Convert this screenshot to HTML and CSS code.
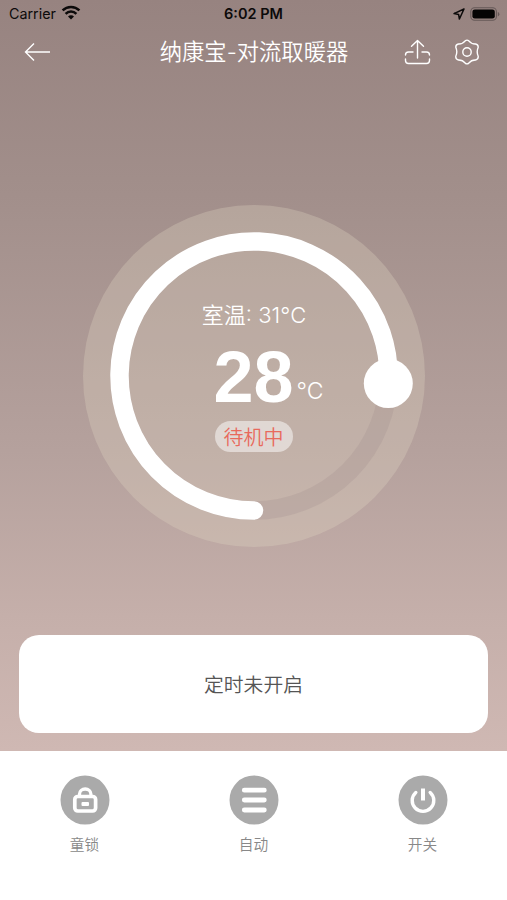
FILE: index.html
```html
<!DOCTYPE html>
<html lang="zh-CN">
<head>
    <meta charset="UTF-8">
    <meta name="viewport" content="width=device-width, initial-scale=1.0">
    <title>纳康宝-对流取暖器</title>
    <link rel="stylesheet" href="styles.css">
</head>
<body>
    <div class="main">
        <div class="status-bar">
            <div class="carrier">
                <span>Carrier</span>
                <svg width="20" height="16" viewBox="0 0 20 16" fill="none" stroke="#0c0a0a" stroke-width="2.5">
                    <path d="M1.600 5.400a12 12 0 0 1 16.800 0"/>
                    <path d="M4.600 8.800a7.700 7.700 0 0 1 10.800 0"/>
                    <path d="M10 14.400l-3-3a4.200 4.200 0 0 1 6 0z" fill="#0c0a0a" stroke="none"/>
                </svg>
            </div>
            <span class="time">6:02 PM</span>
            <div class="battery">
                <svg width="12" height="12" viewBox="0 0 12 12" fill="none" stroke="#0c0a0a" stroke-width="1.5" stroke-linejoin="round">
                    <path d="M11 1L1 5.600l4.600.8.8 4.600z"/>
                </svg>
                <svg width="30" height="14" viewBox="0 0 30 14">
                    <rect x=".8" y=".8" width="25.600" height="12.400" rx="3.800" fill="none" stroke="#655857" stroke-width="1.1"/>
                    <rect x="2.400" y="2.400" width="22.400" height="9.200" rx="2.400" fill="#050404"/>
                    <path d="M27.800 5v4.400q1.600-.6 1.600-2.200t-1.600-2.200z" fill="#655857"/>
                </svg>
            </div>
        </div>
        <div class="nav">
            <svg class="back" width="27" height="20" viewBox="0 0 27 20" fill="none" stroke="#fff" stroke-width="1.4">
                <path d="M26 10H2M10 1.500L1.500 10l8.500 8.500"/>
            </svg>
            <h1>纳康宝-对流取暖器</h1>
            <div class="actions">
                <svg width="27" height="26" viewBox="0 0 27 26" fill="none" stroke="#fff" stroke-width="1.4" stroke-linecap="round" stroke-linejoin="round">
                    <path d="M13.500 19V1.500M7.500 7.300l6-5.800 6 5.800"/>
                    <path d="M9 13H4.500Q1.500 13 1.500 16M1.500 20v1.500q0 3 3 3h18q3 0 3-3V20M25.500 16q0-3-3-3H18"/>
                </svg>
                <svg width="26" height="26" viewBox="0 0 26 26" fill="none" stroke="#fff" stroke-width="1.4" stroke-linejoin="round">
                    <path d="M11.200 1.900Q13 .4 14.800 1.900Q17.500 5.200 21.600 5Q24.300 5.600 24.200 8.200Q22.200 13 24.200 17.200Q24.500 20.200 21.600 21Q17.500 20.800 14.800 24.100Q13 25.600 11.200 24.100Q8.500 20.800 4.400 21Q1.500 20.200 1.800 17.200Q3.800 13 1.800 8.200Q1.700 5.600 4.400 5Q8.500 5.200 11.200 1.900z"/>
                    <circle cx="13" cy="13" r="4.200"/>
                </svg>
            </div>
        </div>
        <div class="dial">
            <svg class="ring" width="342" height="342" viewBox="0 0 342 342" fill="none">
                <circle class="disc" cx="171" cy="171" r="171"/>
                <circle class="track" cx="171" cy="171" r="134.500"/>
                <path class="progress" d="M171 305.500A134.500 134.500 0 1 1 305.300 178.500"/>
                <circle cx="305.300" cy="178.500" r="24.500" fill="#fff"/>
            </svg>
            <div class="room">室温: 31°C</div>
            <div class="target">
                <span class="value">28</span>
                <span class="unit">°C</span>
            </div>
            <div class="state">待机中</div>
        </div>
        <div class="timer">定时未开启</div>
    </div>
    <div class="footer">
        <div class="item">
            <svg width="50" height="50" viewBox="0 0 50 50" fill="none">
                <circle cx="25" cy="25" r="24.500" fill="#aaa"/>
                <rect x="14.800" y="21.500" width="20.800" height="14.500" rx="3" stroke="#fff" stroke-width="3.700"/>
                <path d="M19.500 20.500v-1.500a5.700 5 0 0 1 11.400 0v1.500" stroke="#fff" stroke-width="3.300"/>
                <rect x="21.500" y="27" width="7.500" height="4" rx="1" fill="#fff"/>
            </svg>
            <span>童锁</span>
        </div>
        <div class="item">
            <svg width="50" height="50" viewBox="0 0 50 50" fill="none">
                <circle cx="25" cy="25" r="24.500" fill="#aaa"/>
                <path d="M15.300 15.200h20M15.300 25h20M15.300 35h20" stroke="#fff" stroke-width="4.800" stroke-linecap="round"/>
            </svg>
            <span>自动</span>
        </div>
        <div class="item">
            <svg width="50" height="50" viewBox="0 0 50 50" fill="none" stroke="#fff">
                <circle cx="25" cy="25" r="24.500" fill="#aaa" stroke="none"/>
                <path d="M17.800 17.500a10.800 10.800 0 1 0 14.400 0" stroke-width="3.400" stroke-linecap="round"/>
                <path d="M25 13.500v12" stroke-width="4"/>
            </svg>
            <span>开关</span>
        </div>
    </div>
</body>
</html>
```
FILE: styles.css
```css
* {
    box-sizing: border-box;
}
body {
    margin: 0;
    height: 900px;
    background: #fff;
    font-family: Inter, "Noto Sans CJK SC", sans-serif;
    overflow: hidden;
}
svg {
    display: block;
}
.main {
    height: 751px;
    padding: 0 19px;
    background: linear-gradient(#978380, #a28f8b 26%, #b5a19d 60%, #c5afaa 82%, #cfb8b3);
}
.status-bar {
    display: grid;
    grid-template-columns: 1fr auto 1fr;
    align-items: center;
    height: 27px;
    margin: 0 -12px 0 -10px;
    color: #0c0a0a;
    font-size: 14.300px;
}
.carrier {
    display: flex;
    gap: 5px;
}
.time {
    margin-right: 2px;
    font-weight: 600;
    font-size: 14.500px;
}
.battery {
    display: flex;
    justify-content: flex-end;
    align-items: center;
    gap: 5px;
}
.nav {
    display: grid;
    grid-template-columns: 1fr auto 1fr;
    align-items: center;
    height: 49px;
    padding: 0 8px 0 5px;
    color: #fff;
}
.nav h1 {
    margin: 0 -4px 3px 0;
    font-size: 22.300px;
    font-weight: 350;
}
.actions {
    display: flex;
    justify-content: flex-end;
    gap: 23px;
}
.dial {
    position: relative;
    display: flex;
    flex-direction: column;
    align-items: center;
    width: 342px;
    height: 342px;
    margin: 129px auto 0;
    padding-top: 95px;
    color: #fff;
}
.ring {
    position: absolute;
    top: 0;
    left: 0;
}
.disc {
    fill: rgba(225, 215, 195, 0.3);
}
.track {
    stroke: rgba(160, 140, 140, 0.25);
    stroke-width: 18.500px;
}
.progress {
    stroke: #fff;
    stroke-width: 18.500px;
    stroke-linecap: round;
}
.room, .target, .state {
    position: relative;
}
.room {
    height: 32px;
    padding-left: 1px;
    line-height: 31px;
    font-size: 22px;
    font-weight: 350;
}
.target {
    display: flex;
    align-items: flex-start;
    gap: 3px;
    height: 89px;
    margin-left: 30px;
}
.value {
    font: bold 72px/91px "Liberation Sans", sans-serif;
}
.unit {
    padding-top: 45px;
    font-size: 23px;
    line-height: 28px;
    font-weight: 350;
}
.state {
    width: 78px;
    height: 31px;
    border-radius: 16px;
    background: rgba(255, 255, 255, 0.5);
    color: #e86a5c;
    font-size: 20px;
    font-weight: 350;
    line-height: 34px;
    text-align: center;
}
.timer {
    height: 98px;
    margin-top: 88px;
    border-radius: 20px;
    background: #fff;
    color: #555;
    font-size: 19.800px;
    font-weight: 350;
    line-height: 100px;
    text-align: center;
}
.footer {
    display: grid;
    grid-template-columns: repeat(3, 1fr);
    padding-top: 24px;
}
.item {
    display: flex;
    flex-direction: column;
    align-items: center;
    gap: 8px;
    color: #888;
    font-size: 14.700px;
    font-weight: 350;
}
```
